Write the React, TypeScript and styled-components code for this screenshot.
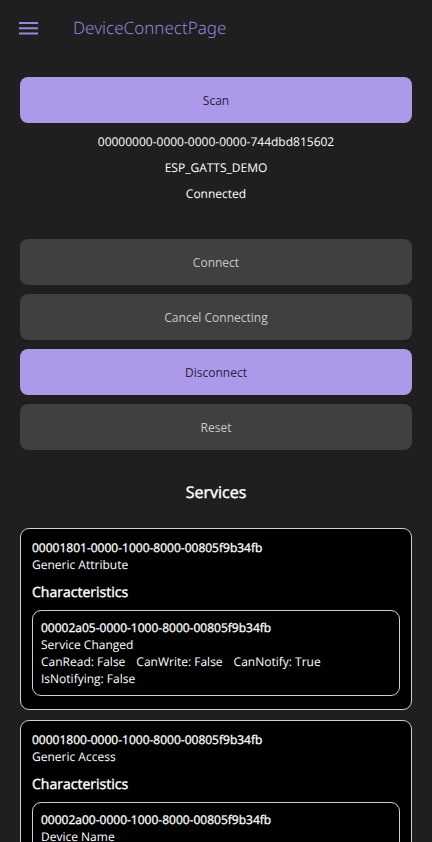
import React from "react";
import styled, { createGlobalStyle } from "styled-components";

const GlobalStyle = createGlobalStyle`
  * { box-sizing: border-box; }
  body {
    margin: 0;
    background: #1f1f1f;
    color: #ffffff;
    font-family: "Open Sans", "Noto Sans", sans-serif;
    font-size: 12px;
    line-height: 17px;
    text-rendering: geometricPrecision;
  }
`;

const Shell = styled.div`
  height: 100vh;
  display: flex;
  flex-direction: column;
`;

const TopBar = styled.header`
  flex: none;
  display: flex;
  align-items: center;
  gap: 32px;
  height: 56px;
  padding: 0 16px;
  color: #9480d6;
`;

const MenuButton = styled.button`
  display: flex;
  padding: 0;
  border: 0;
  background: none;
  color: #9b87d8;
  cursor: pointer;
`;

const PageTitle = styled.h1`
  margin: 0;
  font-family: "Noto Sans", "Open Sans", sans-serif;
  font-size: 17px;
  line-height: 24px;
  font-weight: 300;
`;

const Content = styled.main`
  flex: 1;
  min-height: 0;
  overflow-y: auto;
  scrollbar-width: none;
  padding: 21px 20px;
`;

const ActionButton = styled.button`
  display: block;
  width: 100%;
  height: 46px;
  padding: 0 12px;
  border: 0;
  border-radius: 8px;
  background: #ac99ea;
  color: #2b2144;
  font: inherit;
  cursor: pointer;

  &:disabled {
    background: #404040;
    color: #c8c8c8;
    cursor: default;
  }
`;

const DeviceInfo = styled.div`
  display: flex;
  flex-direction: column;
  align-items: center;
  gap: 9px;
  margin: 10px 0 37px;
`;

const Line = styled.p`
  margin: 0;
`;

const Actions = styled.div`
  display: grid;
  gap: 9px;
`;

const Heading = styled.h2`
  margin: 30px 0 24px;
  text-align: center;
  font-size: 16px;
  line-height: 24px;
  font-weight: 400;
  -webkit-text-stroke: 0.4px currentColor;
`;

const ServiceList = styled.div`
  display: grid;
  gap: 10px;
`;

const ServiceCard = styled.section`
  padding: 10px 11px 13px;
  border: 1px solid #d0d0d0;
  border-radius: 9px;
  background: #000000;
`;

const CharacteristicCard = styled.article`
  padding: 8px;
  border: 1px solid #d0d0d0;
  border-radius: 9px;
`;

const Uuid = styled(Line)`
  -webkit-text-stroke: 0.3px currentColor;
`;

const SubHeading = styled.h3`
  margin: 10px 0 7px;
  font-size: 14px;
  line-height: 20px;
  font-weight: 400;
  -webkit-text-stroke: 0.4px currentColor;
`;

const Flags = styled.div`
  display: flex;
  flex-wrap: wrap;
  column-gap: 11px;
`;

type Characteristic = { uuid: string; name: string; flags: string[] };
type Service = { uuid: string; name: string; characteristics: Characteristic[] };

const services: Service[] = [
  {
    uuid: "00001801-0000-1000-8000-00805f9b34fb",
    name: "Generic Attribute",
    characteristics: [
      {
        uuid: "00002a05-0000-1000-8000-00805f9b34fb",
        name: "Service Changed",
        flags: ["CanRead: False", "CanWrite: False", "CanNotify: True", "IsNotifying: False"],
      },
    ],
  },
  {
    uuid: "00001800-0000-1000-8000-00805f9b34fb",
    name: "Generic Access",
    characteristics: [
      { uuid: "00002a00-0000-1000-8000-00805f9b34fb", name: "Device Name", flags: [] },
    ],
  },
];

export default function App() {
  return (
    <Shell>
      <GlobalStyle />
      <TopBar>
        <MenuButton type="button" aria-label="Open menu">
          <svg width="25" height="24" viewBox="0 0 25 24" aria-hidden="true">
            <path d="M3 7h19M3 12.3h19M3 17.6h19" stroke="currentColor" strokeWidth="2" />
          </svg>
        </MenuButton>
        <PageTitle>DeviceConnectPage</PageTitle>
      </TopBar>
      <Content>
        <ActionButton type="button">Scan</ActionButton>
        <DeviceInfo>
          <Line>00000000-0000-0000-0000-744dbd815602</Line>
          <Line>ESP_GATTS_DEMO</Line>
          <Line>Connected</Line>
        </DeviceInfo>
        <Actions>
          <ActionButton type="button" disabled>Connect</ActionButton>
          <ActionButton type="button" disabled>Cancel Connecting</ActionButton>
          <ActionButton type="button">Disconnect</ActionButton>
          <ActionButton type="button" disabled>Reset</ActionButton>
        </Actions>
        <Heading>Services</Heading>
        <ServiceList>
          {services.map((service) => (
            <ServiceCard key={service.uuid}>
              <Uuid>{service.uuid}</Uuid>
              <Line>{service.name}</Line>
              <SubHeading>Characteristics</SubHeading>
              {service.characteristics.map((item) => (
                <CharacteristicCard key={item.uuid}>
                  <Uuid>{item.uuid}</Uuid>
                  <Line>{item.name}</Line>
                  <Flags>
                    {item.flags.map((flag) => (
                      <span key={flag}>{flag}</span>
                    ))}
                  </Flags>
                </CharacteristicCard>
              ))}
            </ServiceCard>
          ))}
        </ServiceList>
      </Content>
    </Shell>
  );
}
